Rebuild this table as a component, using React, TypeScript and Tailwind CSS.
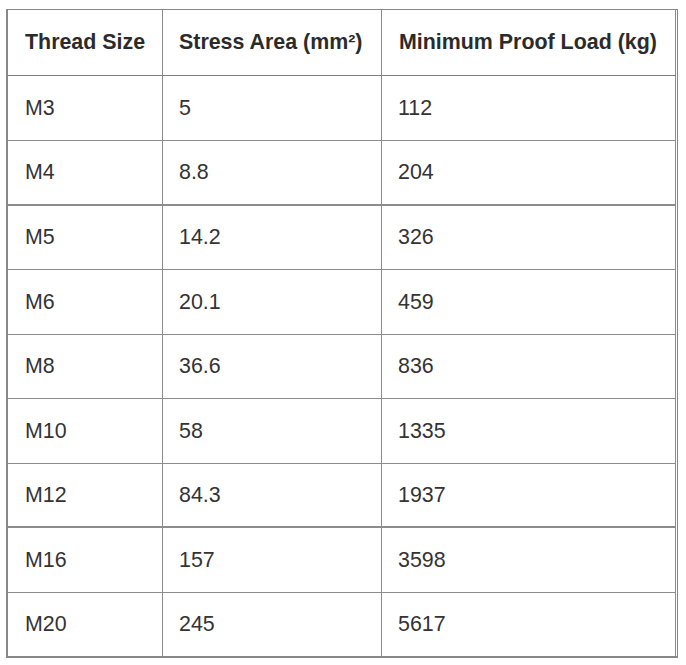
const rows = [
  { size: 'M3', area: '5', load: '112', cls: 'h-[65px] border-b' },
  { size: 'M4', area: '8.8', load: '204', cls: 'h-[65px] border-b-2' },
  { size: 'M5', area: '14.2', load: '326', cls: 'h-[64px] border-b' },
  { size: 'M6', area: '20.1', load: '459', cls: 'h-[65px] border-b' },
  { size: 'M8', area: '36.6', load: '836', cls: 'h-[64px] border-b' },
  { size: 'M10', area: '58', load: '1335', cls: 'h-[65px] border-b' },
  { size: 'M12', area: '84.3', load: '1937', cls: 'h-[64px] border-b-2' },
  { size: 'M16', area: '157', load: '3598', cls: 'h-[65px] border-b' },
  { size: 'M20', area: '245', load: '5617', cls: 'h-[63px]' },
];

export default function App() {
  return (
    <div className="w-[686px] h-[665px] bg-white pt-[9px] pl-[6px] font-['Liberation_Sans',Arial,sans-serif] text-[21.4px] text-[#333]">
      <div className="w-[672px] border-t border-l-2 border-r border-b-2 border-[#888] pr-px">
        {/* header */}
        <div className="grid grid-cols-[155px_219px_294px] h-[66px] border-b border-[#7f7f7f] font-bold text-[#2b2b2b]">
          <div className="flex items-center pl-[17px] border-r border-[#8c8c8c]">Thread Size</div>
          <div className="flex items-center pl-[16px] border-r border-[#8c8c8c]">Stress Area (mm²)</div>
          <div className="flex items-center pl-[17px] border-r border-[#8c8c8c]">Minimum Proof Load (kg)</div>
        </div>
        {rows.map((r) => (
          <div key={r.size} className={`grid grid-cols-[155px_219px_294px] border-[#8c8c8c] ${r.cls}`}>
            <div className="flex items-center pl-[17px] border-r border-[#8c8c8c]">{r.size}</div>
            <div className="flex items-center pl-[16px] border-r border-[#8c8c8c]">{r.area}</div>
            <div className="flex items-center pl-[16px] border-r border-[#8c8c8c]">{r.load}</div>
          </div>
        ))}
      </div>
    </div>
  );
}
